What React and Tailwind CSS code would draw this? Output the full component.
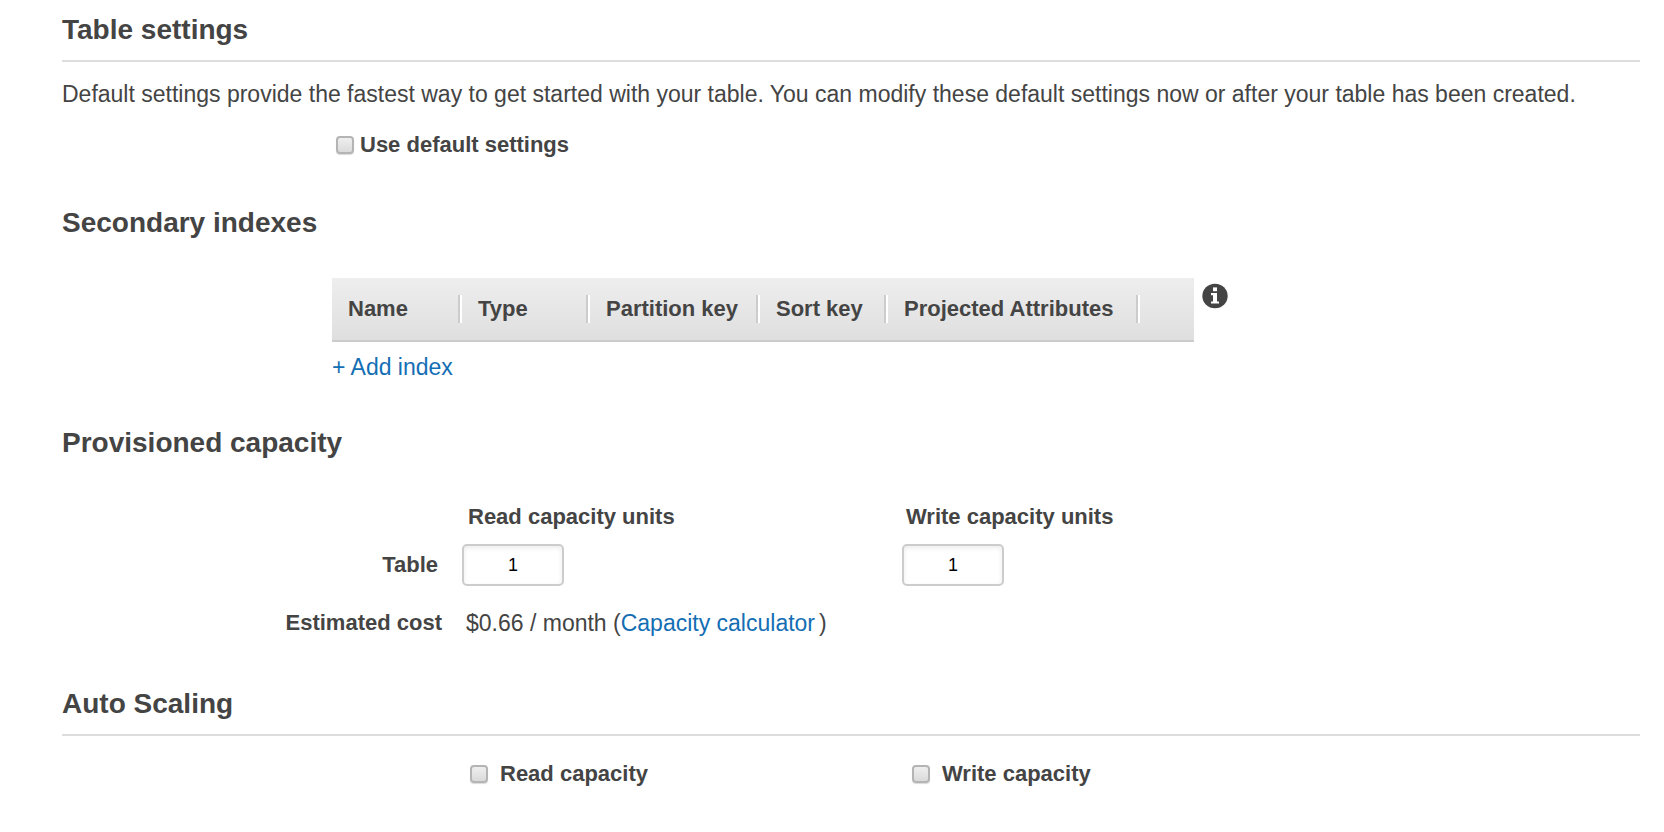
import { useState } from "react";

function Heading({ children, ruled = false }) {
  return (
    <h2
      className={
        ruled
          ? "border-b-2 border-[#dddddd] pb-3.5 text-[28px] leading-8 font-bold"
          : "text-[28px] leading-8 font-bold"
      }
    >
      {children}
    </h2>
  );
}

function Checkbox({ label, wide = false }) {
  const [checked, setChecked] = useState(false);
  return (
    <label className={wide ? "flex items-center gap-3 font-bold" : "flex items-center gap-1.5 font-bold"}>
      <input
        type="checkbox"
        checked={checked}
        onChange={(event) => setChecked(event.target.checked)}
        className="size-[18px] shrink-0 appearance-none rounded-[4px] border-2 border-[#b4b4b4] bg-linear-to-b from-[#efefef] to-[#dadada] shadow-[0_1px_1px_rgba(0,0,0,0.15)] checked:bg-none checked:bg-[#146eb4]"
      />
      {label}
    </label>
  );
}

function UnitsInput({ label }) {
  const [value, setValue] = useState("1");
  return (
    <input
      type="text"
      aria-label={label}
      value={value}
      onChange={(event) => setValue(event.target.value)}
      className="h-[42px] w-[102px] rounded-[5px] border-2 border-[#cccccc] bg-white text-center text-[18px] leading-6 text-black shadow-[inset_0_2px_5px_rgba(0,0,0,0.08)]"
    />
  );
}

function InfoIcon() {
  return (
    <svg viewBox="0 0 26 26" className="size-[26px]" aria-hidden="true">
      <ellipse cx="13" cy="13" rx="12.7" ry="12.2" fill="#444444" />
      <path d="M11 4.4h4v3.8h-4z" fill="#ffffff" />
      <path d="M9 10h6v8.4h2v2.2H9v-2.2h2v-6.2H9z" fill="#ffffff" />
    </svg>
  );
}

const columns = [
  { name: "Name", width: "w-[130px]" },
  { name: "Type", width: "w-[128px]" },
  { name: "Partition key", width: "w-[170px]" },
  { name: "Sort key", width: "w-[128px]" },
  { name: "Projected Attributes", width: "w-[252px]" },
];

function IndexTable() {
  return (
    <table className="w-[862px] table-fixed border-separate border-spacing-0 border-b-2 border-[#cccccc] bg-linear-to-b from-[#eeeeee] to-[#dfdfdf] text-left">
      <thead>
        <tr className="h-[62px]">
          {columns.map((column) => (
            <th key={column.name} scope="col" className={`${column.width} p-0 font-bold`}>
              <div className="flex border-r-2 border-white">
                <div className="flex-1 border-r-2 border-[#cccccc] pl-4 leading-7 whitespace-nowrap">
                  {column.name}
                </div>
              </div>
            </th>
          ))}
          <td />
        </tr>
      </thead>
    </table>
  );
}

export default function App() {
  return (
    <main className="min-h-screen bg-white pt-3.5 pr-6 pb-8 pl-[62px] font-['Liberation_Sans',Arial,sans-serif] text-[22px] leading-7 text-[#444444]">
      <section>
        <Heading ruled>Table settings</Heading>
        <p className="mt-[18px] text-[23px]">
          Default settings provide the fastest way to get started with your table. You can modify these default settings now or after your table has been created.
        </p>
        <div className="mt-[23px] flex pl-[274px]">
          <Checkbox label="Use default settings" />
        </div>
      </section>

      <section className="mt-12">
        <Heading>Secondary indexes</Heading>
        <div className="mt-[39px] pl-[270px]">
          <div className="flex items-start gap-2">
            <IndexTable />
            <button type="button" aria-label="About secondary indexes" className="mt-[5px]">
              <InfoIcon />
            </button>
          </div>
          <button type="button" className="mt-[11px] block text-[23px] text-[#146eb4]">
            + Add index
          </button>
        </div>
      </section>

      <section className="mt-[46px]">
        <Heading>Provisioned capacity</Heading>
        <div className="mt-11 grid grid-cols-[400px_440px_1fr] items-center">
          <div className="col-start-2 pl-1.5 font-bold">Read capacity units</div>
          <div className="pl-1 font-bold">Write capacity units</div>
          <div className="mt-[13px] pr-6 text-right font-bold">Table</div>
          <div className="mt-[13px] flex">
            <UnitsInput label="Table read capacity units" />
          </div>
          <div className="mt-[13px] flex">
            <UnitsInput label="Table write capacity units" />
          </div>
          <div className="mt-[23px] pr-5 text-right font-bold">Estimated cost</div>
          <div className="col-span-2 mt-[23px] pl-1 text-[23px]">
            $0.66 / month (
            <a href="#calculator" className="mr-1 text-[#146eb4]">
              Capacity calculator
            </a>
            )
          </div>
        </div>
      </section>

      <section className="mt-[51px]">
        <Heading ruled>Auto Scaling</Heading>
        <div className="mt-6 grid grid-cols-[400px_440px_1fr]">
          <div className="col-start-2 flex pl-2">
            <Checkbox label="Read capacity" wide />
          </div>
          <div className="flex pl-2.5">
            <Checkbox label="Write capacity" wide />
          </div>
        </div>
      </section>
    </main>
  );
}
